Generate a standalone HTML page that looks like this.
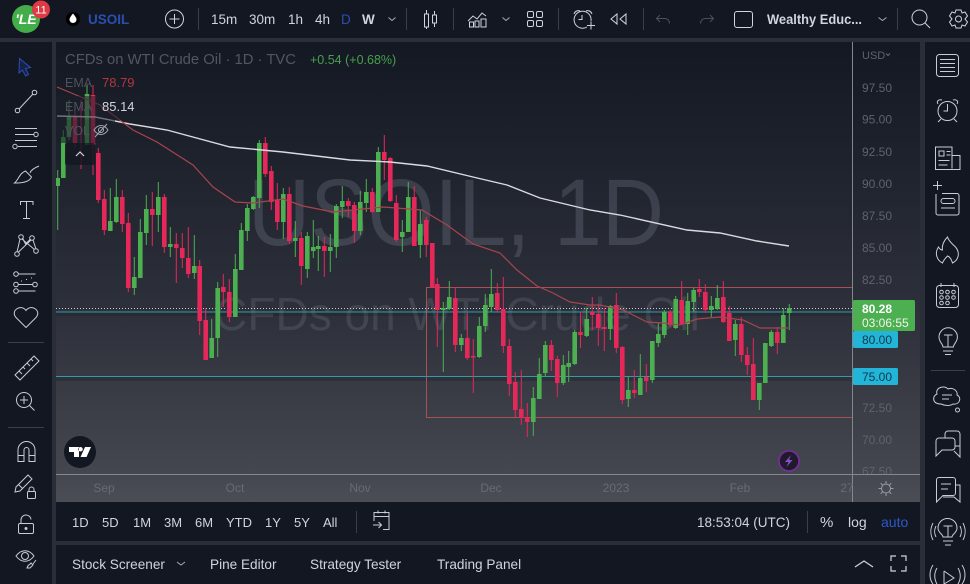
<!DOCTYPE html>
<html><head><meta charset="utf-8"><title>USOIL</title>
<style>html,body{margin:0;padding:0;background:#2a2e39;overflow:hidden}svg{display:block}
text{font-family:"Liberation Sans",sans-serif}</style></head><body>
<svg xmlns="http://www.w3.org/2000/svg" width="970" height="584" viewBox="0 0 970 584">
<defs>
<linearGradient id="g" x1="0" y1="42" x2="0" y2="502" gradientUnits="userSpaceOnUse"><stop offset="0" stop-color="#141823"/><stop offset=".25" stop-color="#1e222c"/><stop offset=".6" stop-color="#2e313b"/><stop offset=".93" stop-color="#44464f"/><stop offset="1" stop-color="#4c4e56"/></linearGradient>
<clipPath id="c"><rect x="56" y="42" width="796" height="432"/></clipPath>
<clipPath id="s"><rect x="853" y="42" width="67" height="432"/></clipPath>
</defs>
<rect width="970" height="584" fill="#2a2e39"/>
<rect width="970" height="38" fill="#131722"/>
<rect y="42" width="52" height="542" fill="#131722"/>
<rect x="925" y="42" width="45" height="542" fill="#131722"/>
<rect x="56" y="42" width="864" height="460" fill="url(#g)"/>
<rect x="56" y="502" width="864" height="39" fill="#131722"/>
<rect x="56" y="545" width="864" height="39" fill="#131722"/>

<g clip-path="url(#c)">
<text x="456" y="245" font-size="95" text-anchor="middle" textLength="416" lengthAdjust="spacingAndGlyphs" fill="#9aa0b4" fill-opacity=".22">USOIL, 1D</text>
<text x="457" y="330" font-size="46" text-anchor="middle" fill="#9aa0b4" fill-opacity=".18">CFDs on WTI Crude Oil</text>
<rect x="56" y="312" width="796" height="4" fill="#000" fill-opacity=".14"/>
<rect x="56" y="377" width="796" height="4" fill="#000" fill-opacity=".14"/>
<path d="M852 287.500H426.500V417.500H852" fill="none" stroke="#a94f55"/>
<path d="M56 312H852M56 376.500H852" stroke="#2f9bab" stroke-width="1"/>
<path d="M56 308.500H852" stroke="#c8ccd4" stroke-dasharray="1 2"/>
<path fill="none" stroke="#4caf50" d="M57.700 170V230M63.300 130V178M69 100V140M87 85V145M110.300 188V231M116.300 179V223M134.300 257V295M140.300 219V278M146.300 195V245M158.300 182V232M170.300 227V257M194.300 235V279M211.700 319V358M217.700 282V357M235.300 254V317M241.300 223V270M247.300 204V241M253.300 196V210M259.300 140V208M283.300 188V239M295.300 221V257M307.300 232V278M313.300 220V258M318.300 236V271M330.300 234V272M336.300 204V258M342.300 186V218M360.300 191V235M366.300 179V212M378.300 147V212M402.300 220V252M408.300 182V232M420.300 210V258M443.300 302V372M449.300 281V310M461.300 334V351M479.300 317V358M485.300 294V332M491.300 269V312M533.300 387V436M539.300 358V399M545.300 341V376M563.300 355V385M568.700 351V382M574.700 330V365M586.700 308V337M610.300 305V340M628.300 377V407M640.300 354V395M652.300 341V383M658.300 323V347M664.300 310V338M675.700 296V329M687.700 293V335M693.700 288V312M711.300 296V317M717.300 285V310M735.300 320V356M759.300 383V410M765.300 343V383M771.300 330V347M783.300 308V343M789.300 304V330"/>
<path fill="none" stroke="#4caf50" stroke-width="4.600" d="M57.700 178V186M63.300 137V178M69 116V137M87 94V145M110.300 221V231M116.300 197V222M134.300 277V288M140.300 232V278M146.300 209V233M158.300 197V215M170.300 244V247M194.300 266V273M211.700 338V358M217.700 288V338M235.300 269V317M241.300 230V270M247.300 208V231M253.300 197V209M259.300 143V198M283.300 194V222M295.300 238V241M307.300 236V269M313.300 247V251M318.300 246V249M330.300 247V251M336.300 206V247M342.300 201V207M360.300 202V231M366.300 192V203M378.300 152V212M402.300 232V237M408.300 197V232M420.300 224V245M443.300 308V310M449.300 297V309M461.300 338V345M479.300 326V357M485.300 305V326M491.300 294V307M533.300 398V422M539.300 374V399M545.300 345V373M563.300 365V383M568.700 363V367M574.700 332V364M586.700 319V336M610.300 306V329M628.300 390V399M640.300 378V395M652.300 341V380M658.300 334V343M664.300 312V335M675.700 299V328M687.700 301V324M693.700 290V302M711.300 306V310M717.300 298V309M735.300 324V340M759.300 383V400M765.300 343V383M771.300 332V346M783.300 315V343M789.300 308V313"/>
<path fill="none" stroke="#e6275a" d="M75 105V148M81 100V169M93 85V175M98.300 148V203M104.300 190V235M122.300 190V232M128.300 213V292M152.300 192V246M164.300 194V253M176.300 233V283M182.300 233V268M188.300 227V278M199.700 260V335M205.700 308V360M223.300 274V307M229.300 279V322M265.300 137V177M271.300 166V210M277.300 183V230M289.300 187V244M301.300 232V285M324.300 237V277M348.300 198V217M354.300 202V243M372.300 188V213M384.300 135V180M390.300 157V202M396.300 195V242M414.300 186V246M426.300 217V257M432.300 243V287M437.300 278V347M455.300 287V352M467.300 313V360M473.300 339V393M497.300 283V312M503.300 277V353M509.300 339V396M515.300 372V417M521.300 370V425M527.300 403V437M551.300 340V371M557.300 356V397M580.500 312V348M592.300 297V330M598.300 305V346M604.300 308V351M616.300 293V353M622.300 346V404M634.300 370V398M646.300 364V392M670.300 310V327M681.700 281V325M699.300 279V297M705.300 284V313M723.300 281V323M729.300 306V341M741.300 317V362M747.300 347V375M753.300 338V400M777.300 327V354"/>
<path fill="none" stroke="#e6275a" stroke-width="4.600" d="M75 116V143M93 95V145M98.300 153V200M104.300 199V230M122.300 197V224M128.300 223V288M152.300 209V215M164.300 197V247M176.300 244V248M182.300 248V258M188.300 258V274M199.700 266V321M205.700 320V360M223.300 287V292M229.300 292V317M265.300 143V174M271.300 171V202M277.300 200V222M289.300 194V241M301.300 238V266M324.300 246V251M348.300 201V206M354.300 205V231M372.300 192V212M384.300 152V160M390.300 158V201M396.300 203V240M414.300 197V246M426.300 220V245M432.300 243V287M437.300 284V310M455.300 298V345M467.300 338V358M473.300 356V357.500M497.300 293V310M503.300 309V346M509.300 346V384M515.300 382V410M521.300 409V418M527.300 417V422M551.300 345V360M557.300 359V383M580.500 332V335M592.300 312V315M598.300 314V328M604.300 327V329M616.300 305V348M622.300 347V400M634.300 390V393M646.300 377V381M670.300 312V325M681.700 300V324M699.300 289V292M705.300 292V310M723.300 297V322M729.300 313V341M741.300 324V355M747.300 355V365M753.300 364V400M777.300 332V343"/>
<path fill="none" stroke="#d9dbe0" stroke-width="1.400" d="M57 116L95 117L130 124L167 130L230 147L283 152L350 160L390 162L427 166L473 177L507 185L540 198L590 210L620 215L687 230L720 233L757 241L789 246"/>
<path fill="none" stroke="#a8444c" stroke-width="1.200" d="M57 87L100 105L133 130L157 142L193 165L213 187L235 202L253 203L283 199L303 206L333 212L383 207L422 210L447 225L473 244L500 253L517 270L537 286L553 293L570 302L590 305L600 305L623 310L647 322L663 323L680 325L697 319L720 317L743 320L760 328L788 328"/>
<rect x="56" y="96" width="83" height="24" fill="#1b1f2a" fill-opacity=".55"/>
<rect x="56" y="120" width="59" height="23" fill="#1b1f2a" fill-opacity=".6"/>
<rect x="65" y="143" width="30" height="22" rx="2" fill="#131722" fill-opacity=".85"/>
<path d="M76 156l4-4 4 4" fill="none" stroke="#d1d4dc" stroke-width="1.200"/>
</g>

<!-- legend -->
<text x="65" y="64" font-size="14.500" fill="#53565f" textLength="231" lengthAdjust="spacingAndGlyphs">CFDs on WTI Crude Oil · 1D · TVC</text>
<text x="310" y="64" font-size="12.500" fill="#47a04d">+0.54 (+0.68%)</text>
<text x="65" y="87" font-size="12.500" fill="#4f525b">EMA</text>
<text x="102" y="87" font-size="13" fill="#b0383e">78.79</text>
<text x="65" y="111" font-size="12.500" fill="#4f525b">EMA</text>
<text x="102" y="111" font-size="13" fill="#d1d4dc">85.14</text>
<text x="65" y="135" font-size="12.500" fill="#4f525b">VOL</text>
<g fill="none" stroke="#a6a9b0"><path d="M94 130c4-6 10-6 14 0c-4 6-10 6-14 0z"/><circle cx="101" cy="130" r="2.500"/><path d="M95 137l12-13"/></g>

<!-- tv logo & lightning -->
<circle cx="80" cy="452" r="16" fill="#131722"/>
<path d="M69 447h10v10h-5v-5h-5zM85 447h6l-4.500 10h-6zM80.500 447a2.200 2.200 0 1 0 .1 0z" fill="#fff"/>
<circle cx="789" cy="461" r="10" fill="#1f1b2c" stroke="#7b2aa3" stroke-width="1.600"/>
<path d="M791 455l-6 7h3.500l-2 5l6-7h-3.500z" fill="#8a4fc0"/>

<!-- price scale -->
<path d="M852.500 42V502" stroke="#85878e"/>
<path d="M56 474.500H920" stroke="#85878e"/>
<g font-size="12" fill="#5f626b" clip-path="url(#s)">
<text x="862" y="59" font-size="11">USD</text>
<text x="862" y="92">97.50</text><text x="862" y="123.500">95.00</text><text x="862" y="156">92.50</text><text x="862" y="188">90.00</text><text x="862" y="220">87.50</text><text x="862" y="252">85.00</text><text x="862" y="284">82.50</text><text x="862" y="412">72.50</text><text x="862" y="444">70.00</text><text x="862" y="475.500">67.50</text>
</g>
<path d="M886 53.500l2 2 2-2" fill="none" stroke="#696c75"/>
<rect x="853" y="300" width="62" height="31" rx="1.500" fill="#4caf50"/>
<text x="862" y="313" font-size="12" font-weight="bold" fill="#fff">80.28</text>
<text x="862" y="327" font-size="12" fill="#f0f6ef">03:06:55</text>
<rect x="853" y="331" width="45" height="17" rx="1.500" fill="#22b5d8"/>
<text x="862" y="344" font-size="12" fill="#0d3a4e">80.00</text>
<rect x="853" y="368" width="45" height="17" rx="1.500" fill="#22b5d8"/>
<text x="862" y="381" font-size="12" fill="#0d3a4e">75.00</text>

<!-- time axis -->
<g font-size="12" fill="#686b73" text-anchor="middle">
<text x="104" y="492">Sep</text><text x="235" y="492">Oct</text><text x="360" y="492">Nov</text><text x="491" y="492">Dec</text><text x="616" y="492">2023</text><text x="740" y="492">Feb</text><text x="847" y="492">27</text>
</g>
<g fill="none" stroke="#9b9da3"><circle cx="886" cy="488.500" r="4.500"/><path d="M886 481v2.500M886 493.500v2.500M878.500 488.500h2.500M891 488.500h2.500M880.700 483.200l1.800 1.800M889.500 492l1.800 1.800M880.700 493.800l1.800-1.800M889.500 485l1.800-1.800"/></g>

<!-- top bar -->
<circle cx="26" cy="19" r="14" fill="#43ad4a"/>
<text x="26" y="24" font-size="14" font-weight="bold" font-style="italic" fill="#fff" text-anchor="middle">'LE</text>
<circle cx="41" cy="9.500" r="9" fill="#dd3a44"/>
<text x="41" y="13.500" font-size="11" fill="#fff" text-anchor="middle">11</text>
<circle cx="73" cy="19" r="7" fill="#000"/>
<path d="M73 13.500c2 2.500 3.500 4.500 3.500 6a3.500 3.500 0 0 1-7 0c0-1.500 1.500-3.500 3.500-6z" fill="#fff"/>
<text x="88" y="24" font-size="13.500" font-weight="bold" fill="#2a4fb0">USOIL</text>
<g fill="none" stroke="#d1d4dc"><circle cx="174.500" cy="19" r="9"/><path d="M174.500 14v10M169.500 19h10"/></g>
<g stroke="#3b3f4a"><path d="M198.500 8v22M406.500 8v22M453.500 8v22M558.500 8v22M643.500 8v22M897.500 8v22"/></g>
<g font-size="13.500" fill="#d1d4dc">
<text x="211" y="24">15m</text><text x="249" y="24">30m</text><text x="288" y="24">1h</text><text x="315" y="24">4h</text><text x="341" y="24" fill="#2a4fb0">D</text><text x="362" y="24" font-weight="bold">W</text>
</g>
<path d="M388.500 17.500l3.500 3 3.500-3" fill="none" stroke="#a8abb3"/>
<g fill="none" stroke="#d1d4dc">
<path d="M424.500 14h4v13h-4zM426.500 10v4M426.500 27v2M432.500 15h4v8h-4zM434.500 11v4M434.500 23v4"/>
<path d="M468 21l5-5 4 3 5-6 4 3" /><path d="M469.500 27v-5h4v5zM475 27v-6h4v6zM481 27v-8h5v8z"/>
<path d="M502.500 17.500l3.500 3 3.500-3" stroke="#a8abb3"/>
<rect x="527.500" y="11.500" width="6" height="6" rx="1.500"/><rect x="536.500" y="11.500" width="6" height="6" rx="1.500"/><rect x="527.500" y="20.500" width="6" height="6" rx="1.500"/><rect x="536.500" y="20.500" width="6" height="6" rx="1.500"/>
<path d="M587 27a8.500 8.500 0 1 1 4-6M582 15v4.500h-3.500M574 14c1-3 4-4 6-3M586 11c2-1 5 0 6 3M587 25.500h8M591 21.500v8"/>
<path d="M617 14v10l-6-5zM626 14v10l-6-5z"/>
</g>
<g fill="none" stroke="#4d505a">
<path d="M660 15l-3.500 3.500 3.500 3.500M656.500 18.500h8c3 0 5 2 5 5"/><path d="M710 15l3.500 3.500-3.500 3.500M713.500 18.500h-8c-3 0-5 2-5 5"/>
</g>
<rect x="734.500" y="11.500" width="18" height="16" rx="2.500" fill="none" stroke="#d1d4dc"/>
<text x="767" y="24" font-size="13.500" fill="#d1d4dc" font-weight="bold" textLength="95" lengthAdjust="spacingAndGlyphs">Wealthy Educ...</text>
<path d="M878.500 17.500l4 3 4-3" fill="none" stroke="#a8abb3"/>
<g fill="none" stroke="#d1d4dc"><circle cx="919.500" cy="17.500" r="7.500"/><path d="M925 23l5 5"/>
<circle cx="958.500" cy="19" r="3"/><path d="M956 10h5l1 3 3-1 2.500 4-2.500 3 2.500 3-2.500 4-3-1-1 3h-5l-1-3-3 1-2.500-4 2.500-3-2.500-3 2.500-4 3 1z"/></g>

<!-- left toolbar -->
<path d="M19.500 58.500l11 9-5 1 3 6-3 1.500-3-6-3.500 3z" fill="#16224a" stroke="#2a4fb0"/>
<g fill="none" stroke="#c9ccd4">
<circle cx="17.500" cy="110.500" r="2.300"/><circle cx="34.500" cy="92.500" r="2.300"/><path d="M19 109l14-15"/>
<path d="M15 128.500h22M15 134.500h19M15 140.500h22M18 146.500h19"/><circle cx="36" cy="134.500" r="2.200"/><circle cx="15" cy="146.500" r="2.200"/>
<path d="M14.500 183c4-3 5-10 11-12l6 6c-2 5-9 6-17 6zM30 173c1-3 4-5 9-7"/>
<path d="M20.500 205v-3.500h12.500v3.500M26.500 201.500v17M23 218.500h7"/>
<circle cx="21" cy="237" r="2.300"/><circle cx="32" cy="238" r="2.300"/><circle cx="36" cy="251" r="2.300"/><circle cx="17" cy="254" r="2.300"/><path d="M20 239l-3 13M22 239l12.500 10.500M31 240l-12.500 12M33 240l3 9M22.500 238l3 6 5-5"/>
<circle cx="16" cy="274" r="2.300"/><circle cx="16" cy="284.500" r="2.300"/><circle cx="16" cy="291" r="2.300"/><circle cx="35" cy="284.500" r="2.300"/><path d="M18.500 274h17M18.500 284.500h14M18.500 291h17"/><path d="M21 281h2M26 279.500h2M31 278h2" stroke-dasharray="1 1"/>
<path d="M26 327.500l-10-10c-6-7 5-14 10-7 5-7 16 0 10 7z"/>
<path d="M8 342.500h36M8 427.500h36" stroke="#3b3f4a"/>
<path d="M15 375l19-19 5 5-19 19zM19 371l3 3M23 367l2 2M27 363l3 3M31 359l2 2"/>
<circle cx="24" cy="400" r="7.500"/><path d="M24 396v8M20 400h8M29.500 405.500l5 5"/>
<path d="M18 461.500V450a8.500 8.500 0 0 1 17 0V461.500h-6V450a2.500 2.500 0 0 0-5 0v11.500zM18 455.500h6M29 455.500h6"/>
<path d="M16 487l12-12 4 4-12 12-5 1zM18.500 484.500l4 4"/><rect x="27.500" y="491.500" width="8" height="7" rx="1"/><path d="M29 491.500v-2a2.500 2.500 0 0 1 5 0v2"/>
<rect x="18.500" y="523.500" width="15" height="10" rx="1.500"/><path d="M21 523.500v-3a5 5 0 0 1 10-1"/><circle cx="26" cy="528.500" r="1" fill="#c9ccd4"/>
<path d="M16 556c5-7 13-7 18 0c-5 7-13 7-18 0z"/><circle cx="25" cy="556" r="3.500"/><path d="M27 568c1-4 3-3 4-5l2 2-3 3zM33 564l3-4"/>
</g>

<!-- bottom toolbars -->
<g font-size="13" fill="#d1d4dc">
<text x="72" y="527">1D</text><text x="102" y="527">5D</text><text x="133" y="527">1M</text><text x="164" y="527">3M</text><text x="195" y="527">6M</text><text x="226" y="527">YTD</text><text x="265" y="527">1Y</text><text x="294" y="527">5Y</text><text x="323" y="527">All</text>
<text x="697" y="527" font-size="13.500">18:53:04 (UTC)</text><text x="820" y="527" font-size="15">%</text><text x="848" y="527" font-size="14">log</text><text x="881" y="527" font-size="14" fill="#2e59c9">auto</text>
</g>
<path d="M356.500 511v22M807.500 511v22" stroke="#3b3f4a"/>
<g fill="none" stroke="#c9ccd4"><path d="M374 521v-8.500h15v17h-6M374 516.500h15M378 510.500v3M385 510.500v3M373 525h8M378.500 522l3 3-3 3"/></g>
<g font-size="13.600" fill="#d1d4dc">
<text x="72" y="569">Stock Screener</text><text x="210" y="569">Pine Editor</text><text x="310" y="569">Strategy Tester</text><text x="437" y="569">Trading Panel</text>
</g>
<path d="M177 562l4 3 4-3" fill="none" stroke="#a8abb3"/>
<g fill="none" stroke="#d1d4dc" stroke-width="1.200"><path d="M855 567l9-6 9 6"/><path d="M891 561v-5h5M901 556h5v5M906 566v5h-5M896 571h-5v-5"/></g>

<!-- right toolbar -->
<g fill="none" stroke="#c9ccd4">
<rect x="936.500" y="54.500" width="22" height="22" rx="3"/><path d="M940 59.500h15M940 63.500h15M940 67.500h15M940 71.500h15"/>
<circle cx="947.500" cy="111" r="9.500"/><path d="M947.500 104v7h-4M938 104c-2-3 1-5 4-4M957 104c2-3-1-5-4-4M941 119l-3 3M954 119l3 3"/>
<path d="M952 168.500v-21.500h-16.500v22.500h24.500v-14h-8M938.500 160.500h11M938.500 165h9"/><rect x="939" y="151" width="5" height="5"/><path d="M946.500 151.500h4M946.500 155h4"/>
<path d="M942 185.500h-9M937.500 181v9M942 193.500h15a2 2 0 0 1 2 2V213a2 2 0 0 1-2 2h-19a2 2 0 0 1-2-2v-19"/><rect x="941" y="198.500" width="14" height="5" rx="2.500"/><path d="M941 208h14"/>
<path d="M947.500 237c1 4 5 7 8 10 5 6 3 13-3 16-1-3-2-6-5-7-2 2-4 4-5 7-6-3-8-10-4-16 1 2 2 3 4 3-1-5 2-10 5-13z"/>
<rect x="936.500" y="285.500" width="22" height="22" rx="3"/><path d="M941 283v4M954 283v4"/><g fill="#131722"><circle cx="941.500" cy="292" r="1.800"/><circle cx="947.500" cy="292" r="1.800"/><circle cx="953.500" cy="292" r="1.800"/><circle cx="941.500" cy="297.500" r="1.800"/><circle cx="947.500" cy="297.500" r="1.800"/><circle cx="953.500" cy="297.500" r="1.800"/><circle cx="941.500" cy="303" r="1.800"/><circle cx="947.500" cy="303" r="1.800"/></g>
<path d="M943 347c0-3-4-5-4-10a9.200 9.200 0 0 1 18.400 0c0 5-4 7-4 10zM943 351h10M945 354.500h6M944 335h8.500M948 335v12"/>
<path d="M931 370.500h34" stroke="#3b3f4a"/>
<path d="M941 404c-9 0-9-8-4-10-2-7 8-9 11-5 5-2 10 2 9 6 5 2 3 10-4 9-3 2-8 2-12 0z"/><path d="M942 395h10M942 399h7"/><circle cx="957.500" cy="410" r="2"/>
<path d="M936 456V441a3 3 0 0 1 3-3H952a3 3 0 0 1 3 3v6a3 3 0 0 1-3 3H942zM945 438v-4a3 3 0 0 1 3-3h9a3 3 0 0 1 3 3v23l-6-6M955 446h5"/>
<path d="M936.500 502v-22a2.500 2.500 0 0 1 2.500-2.500h14a2.500 2.500 0 0 1 2.500 2.500v13a2.500 2.500 0 0 1-2.500 2.500H943zM955.500 485h4.500v17l-6-5h-11M941 484h10M941 489h7"/>
<path d="M943 537c0-3-5-4-5-9a9.500 9.500 0 0 1 19 0c0 5-5 6-5 9zM943 541h10M945 545h6M943.500 526h9M948 526v11M936 526c-2 4-2 7 0 11M933 523c-3 6-3 11 0 17M960 526c2 4 2 7 0 11M963 523c3 6 3 11 0 17"/>
<path d="M944 571v13M944 571l10 7-10 6M937 568c-3 5-3 11 0 16M933 565c-4 6-4 14 0 19M958 568c3 5 3 11 0 16M962 565c4 6 4 14 0 19"/>
</g>
</svg>
</body></html>
